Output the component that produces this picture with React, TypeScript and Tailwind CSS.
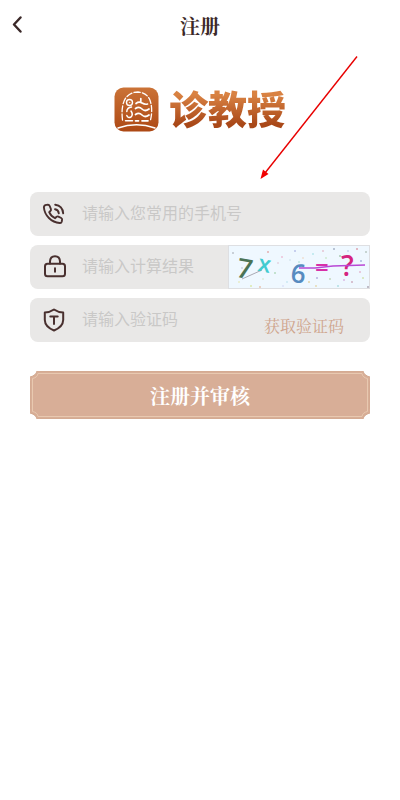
import React from 'react';

const sans = "font-['Noto_Sans_CJK_SC',sans-serif]";
const serif = "font-['Noto_Serif_CJK_SC','Source_Han_Serif_SC','Liberation_Serif','Noto_Sans_CJK_SC',serif]";

function PhoneIcon() {
  return (
    <svg viewBox="0 0 24 24" className="h-6 w-6" fill="none" stroke="#49302f" strokeWidth="1.9" strokeLinecap="round" strokeLinejoin="round" aria-hidden="true">
      <path d="M4.4 2.9 L6 2.8 Q7.2 2.8 7.7 4 L8.9 7 Q9.3 8.2 8.4 9 L7.2 10.2 Q9 14.4 13 16.2 L14.6 14.8 Q15.4 14.1 16.4 14.6 L19.2 16 Q20.3 16.6 20.1 17.7 L19.7 19.8 Q19.3 21.2 17.7 21 C9.5 20.5 2.4 13.5 1.9 5.3 Q2 3.2 4.4 2.9Z" />
      <path d="M13 7.2 Q16.4 7.8 16.8 11.4" />
      <path d="M13.2 2.7 Q20.6 3.6 21.2 11.4" />
    </svg>
  );
}

function LockIcon() {
  return (
    <svg viewBox="0 0 24 24" className="h-6 w-6" fill="none" stroke="#49302f" strokeWidth="2" strokeLinecap="round" aria-hidden="true">
      <rect x="3" y="8.8" width="20" height="12.4" rx="2.5" />
      <path d="M8 8.4 V6.4 Q8.2 1.2 13 1.2 Q17.8 1.2 18 6.4 V8.4" />
      <path d="M13 13.2 V16.8" />
    </svg>
  );
}

function ShieldIcon() {
  return (
    <svg viewBox="0 0 24 24" className="h-6 w-6" fill="none" stroke="#49302f" strokeWidth="2" strokeLinecap="round" strokeLinejoin="round" aria-hidden="true">
      <path d="M12 1.5 Q16 4.3 21.2 4.5 V12 Q21 18.8 12 22.5 Q3 18.8 2.8 12 V4.5 Q8 4.3 12 1.5Z" />
      <path d="M8.3 8.6 H15.7 M12 8.6 V16" />
    </svg>
  );
}

function LogoMark() {
  return (
    <svg viewBox="0 0 45 45" className="h-[45px] w-[45px]" fill="none" stroke="#fff" strokeLinecap="round" aria-hidden="true">
      <defs>
        <linearGradient id="mark" x1="0" y1="0" x2="0" y2="1">
          <stop offset="0" stopColor="#cb7337" />
          <stop offset="1" stopColor="#ad4814" />
        </linearGradient>
      </defs>
      <rect x="0.5" y="0.5" width="44" height="44" rx="9" fill="url(#mark)" stroke="none" />
      <path d="M4 41 Q22.5 34.5 41 41" strokeWidth="1.6" />
      <path d="M8.5 33 C7.5 25 8 16 12 10.5 Q17 5 24 5 Q32 5.5 35.5 12 C38.5 19 38 27 36.5 33" strokeWidth="1.3" strokeDasharray="6 2.2" />
      <circle cx="15.5" cy="15.5" r="3" strokeWidth="1.4" />
      <circle cx="15.5" cy="15.5" r="0.4" fill="#fff" strokeWidth="0.4" />
      <path d="M17.5 20 Q13 20.5 12.8 24.5 M17 24 Q19.5 27.5 17 30 Q14 31.5 12.8 28.5 M11.5 33.8 H18.5" strokeWidth="1.5" />
      <path d="M26.8 11.5 V15.5 M22 16.5 Q25 14.2 28 16 T33.5 17 M21.5 21.5 Q25 19 28 22 T35 22 M21.5 27.5 Q25 25 28 28 T35 28 M21.5 33.8 H24.5 M28 33.8 H34" strokeWidth="1.7" />
    </svg>
  );
}

const specks: [number, number, string][] = [
  [4, 7, '#858b92'], [13, 22, '#a9adbf'], [22, 40, '#c6da52'], [31, 41, '#df8e5a'], [39, 6, '#d7635a'],
  [46, 27, '#76bd7a'], [53, 11, '#e888b0'], [58, 36, '#a4d7e6'], [66, 5, '#8088cf'], [70, 16, '#90d7c0'],
  [80, 36, '#d0b04b'], [84, 8, '#7ed4d9'], [88, 32, '#7a6bc2'], [94, 5, '#d88ca1'], [101, 33, '#98b67b'],
  [105, 3, '#5a6b8a'], [111, 10, '#5b9a61'], [115, 34, '#c27bc7'], [123, 36, '#ac6480'], [128, 3, '#c84858'],
  [132, 15, '#5e73bc'], [137, 6, '#7c967f'], [139, 41, '#6b5468'], [134, 32, '#b5ce62'], [10, 36, '#e0e187'],
  [49, 17, '#d8b0c1'], [61, 14, '#c0d9e0'], [74, 12, '#ebc7a7'], [87, 40, '#dab95f'], [109, 40, '#6dc5c5'],
  [119, 5, '#99b3e0'], [131, 26, '#d77ba0'], [97, 12, '#a8dc9e'], [54, 40, '#c4c9f0'], [34, 33, '#c6dfb1'],
];

function Captcha() {
  return (
    <button type="button" aria-label="刷新计算题" className="h-full w-[142px] shrink-0 cursor-pointer border border-[#dedfe2] bg-[#eff8ff]">
      <svg viewBox="0 0 140 42" className="h-full w-full font-['Open_Sans',sans-serif] font-semibold" aria-hidden="true">
        {specks.map(([x, y, color]) => (
          <circle key={`${x}-${y}`} cx={x} cy={y} r="0.7" fill={color} />
        ))}
        <path d="M13 33 L33 24" stroke="#aaa9b4" />
        <text x="8" y="32" fontSize="27" fill="#4b7355" transform="rotate(10 15 23)">7</text>
        <text x="29" y="26" fontSize="23" fill="#42cbd0" transform="rotate(10 36 20)">x</text>
        <text x="62" y="37" fontSize="26" fill="#568bc0" transform="rotate(6 70 28)">6</text>
        <text x="86" y="30" fontSize="24" fill="#d730a8">=</text>
        <text x="112" y="30" fontSize="28" fill="#d5247f">?</text>
        <path d="M70 22 H86 L104 20 L136 19" fill="none" stroke="#b848d5" strokeWidth="1.6" />
      </svg>
    </button>
  );
}

type FieldProps = {
  id: string;
  label: string;
  type?: string;
  icon: React.ReactNode;
  children?: React.ReactNode;
};

function Field({ id, label, type = 'text', icon, children }: FieldProps) {
  return (
    <div className="flex h-11 items-center rounded-lg bg-[#e9e8e7] pl-3">
      <label htmlFor={id} aria-label={label} className="shrink-0">{icon}</label>
      <input
        id={id}
        type={type}
        placeholder={label}
        className={`ml-4 h-full min-w-0 flex-1 bg-transparent pb-1 text-base text-[#49302f] outline-none placeholder:text-[#c9c8c7] ${sans}`}
      />
      {children}
    </div>
  );
}

function Corner({ className }: { className: string }) {
  return (
    <svg viewBox="0 0 10 10" className={`absolute h-[10px] w-[10px] ${className}`} fill="none" aria-hidden="true">
      <rect width="10" height="10" fill="#d8ae97" />
      <path d="M0 0 H7 Q6 4 0 6Z" fill="#fff" />
      <path d="M2.5 10 V7.5 Q7.5 6.5 8 2.5 H10" stroke="#e8c9b0" />
      <path d="M0 6 Q6 4.5 7 0" stroke="#d4ab92" />
    </svg>
  );
}

export default function App() {
  return (
    <main className="relative min-h-screen bg-white">
      <header className="grid h-[50px] grid-cols-[1fr_auto_1fr] items-center">
        <button type="button" aria-label="返回" className="flex h-10 w-[34px] items-center justify-center">
          <svg viewBox="0 0 12 18" className="h-[18px] w-3" fill="none" stroke="#3b2929" strokeWidth="2.4" strokeLinecap="round" strokeLinejoin="round" aria-hidden="true">
            <path d="M9.5 1.5 L3 8.5 L9.5 15.5" />
          </svg>
        </button>
        <h1 className={`pt-0.5 text-xl font-bold text-[#3b2929] ${serif}`}>注册</h1>
      </header>

      <div className="mt-[37px] flex h-[45px] items-center justify-center gap-[10px]">
        <LogoMark />
        <span className={`bg-linear-to-b from-[#d98242] from-20% to-[#a94818] to-80% bg-clip-text pb-1 text-[39px] leading-[45px] font-black text-transparent ${sans}`}>
          诊教授
        </span>
      </div>

      <form className="mt-[60px] px-[30px]" onSubmit={(e) => e.preventDefault()}>
        <div className="flex flex-col gap-[9px]">
          <Field id="phone" type="tel" label="请输入您常用的手机号" icon={<PhoneIcon />} />
          <Field id="result" label="请输入计算结果" icon={<LockIcon />}>
            <Captcha />
          </Field>
          <Field id="code" label="请输入验证码" icon={<ShieldIcon />}>
            <button type="button" className={`mr-[26px] shrink-0 self-end pb-1 text-base leading-6 text-[#cfa58d] ${serif}`}>
              获取验证码
            </button>
          </Field>
        </div>
        <button type="submit" className={`relative mt-[29px] h-12 w-full bg-[#d8ae97] pt-0.5 text-xl font-bold text-white ${serif}`}>
          <span className="absolute inset-0 border border-[#d4ab92]" />
          <span className="absolute inset-[2px] border border-[#e8c9b0]" />
          <Corner className="top-0 left-0" />
          <Corner className="top-0 right-0 -scale-x-100" />
          <Corner className="bottom-0 left-0 -scale-y-100" />
          <Corner className="right-0 bottom-0 -scale-100" />
          <span className="relative">注册并审核</span>
        </button>
      </form>

      <svg viewBox="0 0 100 126" className="pointer-events-none absolute top-[55px] left-[259px] h-[126px] w-[100px]" aria-hidden="true">
        <path d="M98 1.5 L6 118" stroke="#e80000" strokeWidth="1.4" />
        <path d="M1.5 124 L4 114.5 L9.5 119Z" fill="#f00000" />
      </svg>
    </main>
  );
}
